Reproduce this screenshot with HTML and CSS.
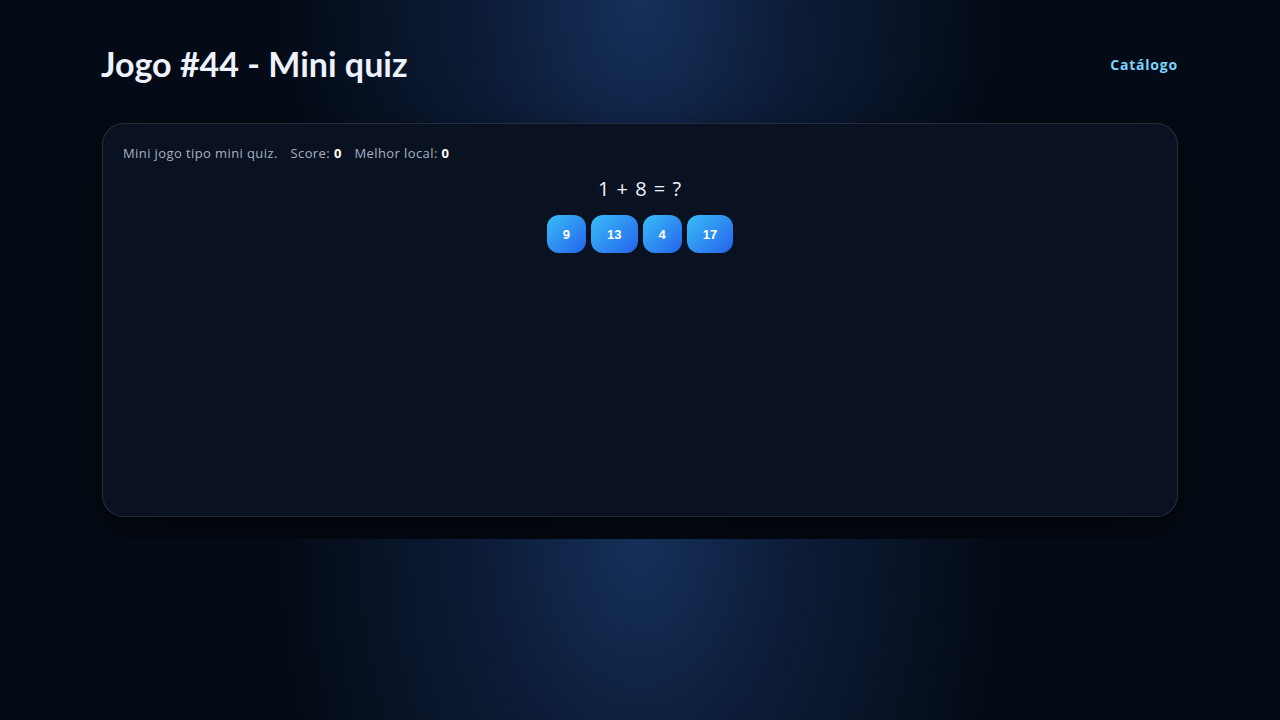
FILE: index.html
```html
<!DOCTYPE html>
<html lang="pt">
<head>
<meta charset="utf-8">
<title>Jogo #44 - Mini quiz</title>
<link rel="stylesheet" href="styles.css">
</head>
<body>
<div class="wrap">
  <header class="top">
    <h1 class="title">Jogo #44 - Mini quiz</h1>
    <a class="nav" href="#">Catálogo</a>
  </header>
  <main class="card">
    <div class="info">Mini jogo tipo mini quiz. <span class="sep">Score: <b>0</b></span> <span class="sep">Melhor local: <b>0</b></span></div>
    <div class="question">1 + 8 = ?</div>
    <div class="answers">
      <button class="ans">9</button>
      <button class="ans">13</button>
      <button class="ans">4</button>
      <button class="ans">17</button>
    </div>
  </main>
</div>
</body>
</html>
```
FILE: styles.css
```css
body {
  margin: 0;
  font-family: "Open Sans", Lato, sans-serif;
  color: #e2e8f0;
  background: radial-gradient(ellipse 360px 100% at 50% 0%, #15305a 0%, #0c1b36 45%, #040b16 100%);
  background-color: #040a14;
}
.wrap {
  max-width: 1076px;
  margin: 0 auto;
  padding: 36px 0 22px;
}
.top {
  display: flex;
  justify-content: space-between;
  align-items: center;
  margin-bottom: 31px;
}
.title {
  margin: 0 0 0 -1px;
  font-family: Lato, sans-serif;
  font-size: 34px;
  font-weight: 700;
  color: #eef2ff;
  line-height: 56px;
}
.nav {
  color: #7dd3fc;
  text-decoration: none;
  font-weight: 700;
  font-size: 14px;
  letter-spacing: 0.8px;
}
.card {
  background: #0a1120;
  border: 1px solid rgba(148, 163, 184, 0.2);
  border-radius: 22px;
  min-height: 394px;
  padding: 20px;
  box-sizing: border-box;
  box-shadow: 0 20px 50px rgba(0, 0, 0, 0.55);
}
.info {
  font-size: 13px;
  color: #a5b1c4;
  line-height: 18px;
  letter-spacing: 0.4px;
}
.info b {
  color: #fff;
}
.sep {
  margin-left: 9px;
}
.question {
  text-align: center;
  font-size: 20px;
  color: #f1f5f9;
  margin-top: 14px;
  line-height: 26px;
  letter-spacing: 1px;
}
.answers {
  display: flex;
  justify-content: center;
  gap: 5px;
  margin-top: 13px;
}
.ans {
  font-family: "Liberation Sans", Arial, sans-serif;
  font-weight: 700;
  font-size: 13px;
  color: #fff;
  border: none;
  border-radius: 12px;
  height: 38px;
  padding: 0 16px;
  background: linear-gradient(135deg, #38bdf8, #2563eb);
}
```
